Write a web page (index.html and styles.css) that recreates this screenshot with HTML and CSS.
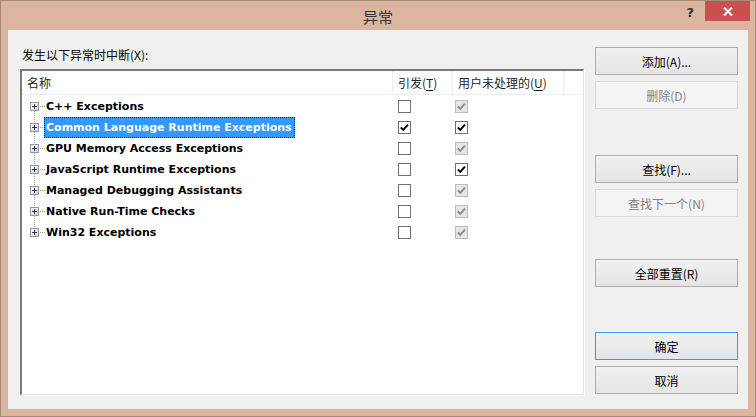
FILE: index.html
```html
<!DOCTYPE html>
<html lang="zh-CN">
<head>
    <meta charset="UTF-8">
    <title>异常</title>
    <link rel="stylesheet" href="styles.css">
</head>
<body>
    <div class="window">
        <!-- Title bar -->
        <div class="titlebar">
            <div></div>
            <div class="title">异常</div>
            <div class="controls">
                <span class="help">?</span>
                <span class="close">
                    <svg width="10" height="9" viewBox="0 0 10 9"><path d="M1 0.5 L9 8.5 M9 0.5 L1 8.5" stroke="#fff" stroke-width="2"/></svg>
                </span>
            </div>
        </div>

        <div class="client">
            <div class="main">
                <div class="caption">发生以下异常时中断(X):</div>

                <div class="list">
                    <div class="list-head">
                        <div class="hcell">名称</div>
                        <div class="hcell">引发(<u>T</u>)</div>
                        <div class="hcell">用户未处理的(<u>U</u>)</div>
                        <div class="hcell"></div>
                    </div>

                    <div class="tree" id="tree"></div>
                </div>
            </div>

            <div class="buttons">
                <button class="btn b-add">添加(A)...</button>
                <button class="btn b-del" disabled>删除(D)</button>
                <button class="btn b-find">查找(F)...</button>
                <button class="btn b-next" disabled>查找下一个(N)</button>
                <button class="btn b-reset">全部重置(R)</button>
                <button class="btn b-ok default">确定</button>
                <button class="btn b-cancel">取消</button>
            </div>
        </div>
    </div>

    <script>
        // name, break when thrown, user-unhandled, unhandled column enabled
        const rows = [
            ["C++ Exceptions", false, true, false],
            ["Common Language Runtime Exceptions", true, true, true],
            ["GPU Memory Access Exceptions", false, true, false],
            ["JavaScript Runtime Exceptions", false, true, true],
            ["Managed Debugging Assistants", false, true, false],
            ["Native Run-Time Checks", false, true, false],
            ["Win32 Exceptions", false, true, false]
        ];

        const check = '<svg width="11" height="11" viewBox="0 0 11 11"><path d="M1.8 5.4 L4.2 7.9 L9 2.6" fill="none" stroke="currentColor" stroke-width="2"/></svg>';
        const plus = '<svg width="9" height="9" viewBox="0 0 9 9"><rect x="0.5" y="0.5" width="8" height="8" fill="url(#g)" stroke="#969696"/><path d="M2 4.5 H7 M4.5 2 V7" stroke="#1f3a6a"/></svg>';

        function box(checked, enabled) {
            let cls = "chk";
            if (!enabled) cls += " disabled";
            return `<span class="${cls}">${checked ? check : ""}</span>`;
        }

        const tree = document.getElementById("tree");
        rows.forEach((r, i) => {
            const row = document.createElement("div");
            row.className = "row";
            if (i === 0) row.classList.add("first");
            if (i === rows.length - 1) row.classList.add("last");
            if (i === 1) row.classList.add("selected");
            row.innerHTML = `
                <div class="name-cell">
                    <div class="twisty"><span class="seg top"></span>${plus}<span class="seg bottom"></span></div>
                    <span class="hline"></span>
                    <span class="label">${r[0]}</span>
                </div>
                <div class="c1">${box(r[1], true)}</div>
                <div class="c2">${box(r[2], r[3])}</div>
                <div></div>`;
            tree.appendChild(row);
        });
    </script>
    <svg width="0" height="0" style="position:absolute">
        <defs>
            <linearGradient id="g" x1="0" y1="0" x2="1" y2="1">
                <stop offset="0" stop-color="#ffffff"/>
                <stop offset="1" stop-color="#d4d4d4"/>
            </linearGradient>
        </defs>
    </svg>
</body>
</html>
```

FILE: styles.css
```css
* {
    box-sizing: border-box;
}
body {
    margin: 0;
    width: 756px;
    height: 417px;
    font-family: "Noto Sans CJK SC", "Noto Sans", sans-serif;
    font-size: 12px;
    color: #000;
    overflow: hidden;
}
.window {
    width: 756px;
    height: 417px;
    background: #dcb5a0;
    border: 1px solid #a88a7a;
    display: flex;
    flex-direction: column;
}
.titlebar {
    height: 29px;
    display: grid;
    grid-template-columns: 1fr auto 1fr;
}
.title {
    font-size: 15px;
    color: #333;
    line-height: 29px;
    padding-top: 1px;
}
.controls {
    justify-self: end;
    display: flex;
    align-items: flex-start;
    margin-right: 5px;
}
.help {
    font-family: "DejaVu Sans", sans-serif;
    font-weight: bold;
    font-size: 13px;
    color: #333;
    margin-top: 4px;
    margin-right: 11px;
}
.close {
    width: 45px;
    height: 20px;
    background: #c75050;
    display: flex;
    align-items: center;
    justify-content: center;
}
.client {
    flex: 1;
    margin: 0 7px 7px 7px;
    background: #f0f0f0;
    display: flex;
    padding: 17px 10px 14px 12px;
}
.main {
    flex: 1;
    display: flex;
    flex-direction: column;
}
.caption {
    height: 22px;
    line-height: 16px;
    padding-left: 2px;
}
.list {
    flex: 1;
    background: #fff;
    border-style: solid;
    border-width: 2px 1px 1px 2px;
    border-color: #7a7a7a #e3e3e3 #e3e3e3 #7a7a7a;
    box-shadow: 1px 1px 0 #fff;
}
.list-head {
    display: grid;
    grid-template-columns: 371px 60px 111px 1fr;
    height: 24px;
    border-bottom: 1px solid #e6eef8;
}
.hcell {
    border-right: 1px solid #e6eef8;
    padding-left: 5px;
    line-height: 24px;
    color: #1e1e1e;
}
.hcell:last-child {
    border-right: none;
}
.hcell u {
    text-underline-offset: 2px;
}
.tree {
    padding-top: 1px;
}
.row {
    display: grid;
    grid-template-columns: 371px 60px 111px 1fr;
    height: 21px;
}
.name-cell {
    display: flex;
    align-items: center;
    padding-left: 8px;
}
.twisty {
    width: 9px;
    height: 21px;
    display: flex;
    flex-direction: column;
}
.twisty svg {
    display: block;
    flex: none;
}
.seg {
    flex: 1;
    background-image: linear-gradient(to bottom, #a0a0a0 50%, transparent 50%);
    background-size: 1px 2px;
    background-repeat: repeat-y;
    background-position: 4px 0;
}
.row.first .seg.top,
.row.last .seg.bottom {
    background: none;
}
.hline {
    width: 5px;
    height: 1px;
    margin-left: 1px;
    margin-right: -1px;
    background-image: linear-gradient(to right, #a0a0a0 50%, transparent 50%);
    background-size: 2px 1px;
}
.label {
    font-family: "DejaVu Sans", sans-serif;
    font-weight: bold;
    font-size: 11px;
    height: 21px;
    line-height: 19px;
    padding: 0 2px 0 1px;
    border: 1px dotted transparent;
    color: #000;
}
.row.selected .label {
    background: #3399ff;
    color: #fff;
    border-color: #222;
}
.c1,
.c2 {
    display: flex;
    align-items: center;
}
.c1 {
    padding-left: 5px;
}
.c2 {
    padding-left: 2px;
}
.chk {
    width: 13px;
    height: 13px;
    border: 1px solid #707070;
    background: #fff;
    color: #000;
    display: flex;
    align-items: center;
    justify-content: center;
}
.chk.disabled {
    border-color: #bcbcbc;
    background: #e6e6e6;
    color: #8c8c8c;
}
.buttons {
    width: 143px;
    margin-left: 11px;
    display: flex;
    flex-direction: column;
}
.btn {
    height: 28px;
    font-family: "Noto Sans CJK SC", "Noto Sans", sans-serif;
    font-size: 12px;
    color: #000;
    border: 1px solid #adadad;
    background: linear-gradient(#f0f0f0, #e5e5e5);
    padding: 0;
}
.btn:disabled {
    color: #838383;
    border-color: #d9d9d9;
    background: #f4f4f4;
}
.btn.default {
    border-color: #3399ff;
}
.b-del {
    margin-top: 6px;
}
.b-find {
    margin-top: 46px;
}
.b-next {
    margin-top: 6px;
}
.b-reset {
    margin-top: 42px;
}
.b-ok {
    margin-top: 45px;
}
.b-cancel {
    margin-top: 6px;
}
```
